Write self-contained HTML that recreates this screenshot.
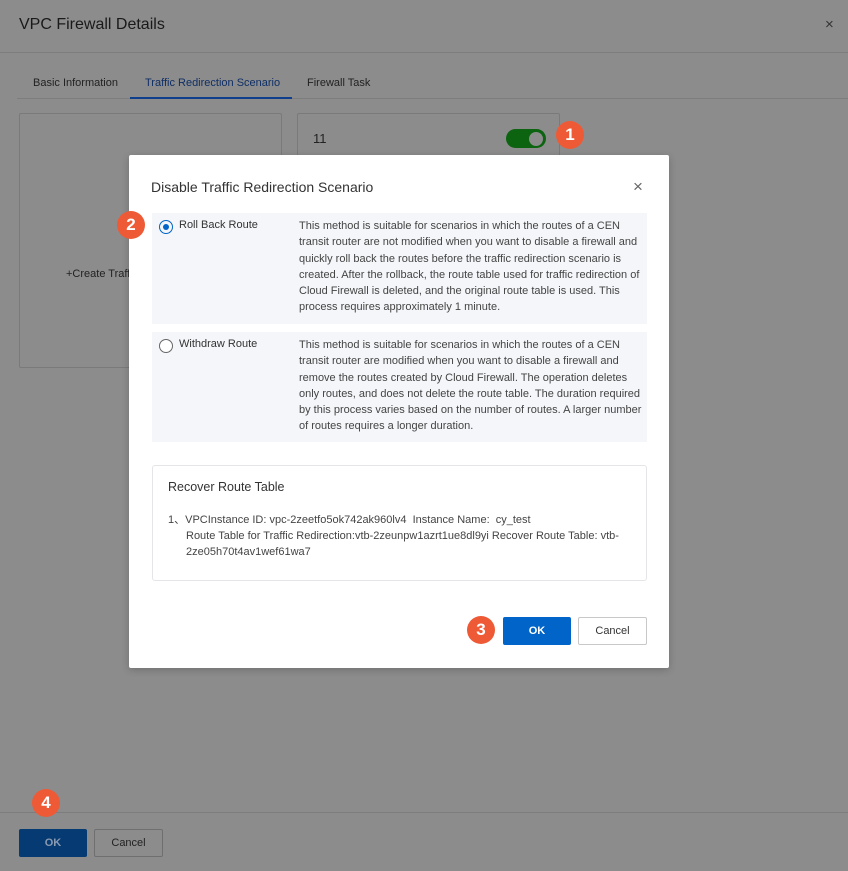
<!DOCTYPE html>
<html><head><meta charset="utf-8"><style>
*{box-sizing:border-box;margin:0;padding:0}
body{width:848px;height:871px;position:relative;overflow:hidden;background:#8c8c8c;font-family:"Liberation Sans",sans-serif;color:#333}
.a{position:absolute}
.badge{position:absolute;width:28px;height:28px;border-radius:50%;background:#ee5a36;color:#fff;font-weight:bold;font-size:17px;text-align:center;line-height:28px}
.p{font-size:11px;line-height:16.3px;color:#444}
</style></head><body>
<div class="a" style="left:19px;top:16px;font-size:16px;color:#1a1a1a">VPC Firewall Details</div>
<div class="a" style="left:825px;top:16px;font-size:15px;color:#333">×</div>
<div class="a" style="left:0;top:52px;width:848px;height:1px;background:#7d7d7d"></div>
<div class="a" style="left:17px;top:98px;width:831px;height:1px;background:#7d7d7d"></div>
<div class="a" style="left:33px;top:77px;font-size:11px;color:#222">Basic Information</div>
<div class="a" style="left:145px;top:77px;font-size:11px;color:#0f2f66">Traffic Redirection Scenario</div>
<div class="a" style="left:130px;top:97px;width:162px;height:2px;background:#0f3e8c"></div>
<div class="a" style="left:307px;top:77px;font-size:11px;color:#222">Firewall Task</div>
<div class="a" style="left:19px;top:113px;width:263px;height:255px;border:1px solid #7a7a7a;border-radius:2px"></div>
<div class="a" style="left:66px;top:268px;font-size:11px;color:#222">+Create Traffic</div>
<div class="a" style="left:297px;top:113px;width:263px;height:60px;border:1px solid #7a7a7a;border-radius:2px"></div>
<div class="a" style="left:313px;top:131px;font-size:13px;color:#222">11</div>
<div class="a" style="left:506px;top:129px;width:40px;height:19px;border-radius:10px;background:#0c6310"></div>
<div class="a" style="left:529px;top:132px;width:14px;height:14px;border-radius:50%;background:#8c8c8c"></div>
<div class="badge" style="left:556px;top:121px">1</div>

<div class="a" style="left:129px;top:155px;width:540px;height:513px;background:#fff;border-radius:2px;box-shadow:0 2px 8px rgba(0,0,0,.2)">
<div class="a" style="left:22px;top:24px;font-size:14px;color:#333">Disable Traffic Redirection Scenario</div>
<div class="a" style="left:504px;top:22px;font-size:17px;color:#666">×</div>
<div class="a" style="left:23px;top:58px;width:495px;height:111px;background:#f4f6f9"></div>
<div class="a" style="left:30px;top:65px;width:14px;height:14px;border-radius:50%;border:1px solid #0064c8"></div>
<div class="a" style="left:34px;top:69px;width:6px;height:6px;border-radius:50%;background:#0064c8"></div>
<div class="a" style="left:50px;top:64px;font-size:11px;color:#333">Roll Back Route</div>
<div class="a p" style="left:170px;top:63px;width:348px">This method is suitable for scenarios in which the routes of a CEN transit router are not modified when you want to disable a firewall and quickly roll back the routes before the traffic redirection scenario is created. After the rollback, the route table used for traffic redirection of Cloud Firewall is deleted, and the original route table is used. This process requires approximately 1 minute.</div>
<div class="a" style="left:23px;top:177px;width:495px;height:110px;background:#f4f6f9"></div>
<div class="a" style="left:30px;top:184px;width:14px;height:14px;border-radius:50%;border:1px solid #666;background:#fff"></div>
<div class="a" style="left:50px;top:183px;font-size:11px;color:#333">Withdraw Route</div>
<div class="a p" style="left:170px;top:182px;width:348px">This method is suitable for scenarios in which the routes of a CEN transit router are modified when you want to disable a firewall and remove the routes created by Cloud Firewall. The operation deletes only routes, and does not delete the route table. The duration required by this process varies based on the number of routes. A larger number of routes requires a longer duration.</div>
<div class="a" style="left:23px;top:310px;width:495px;height:116px;border:1px solid #e3e5e8;border-radius:3px"></div>
<div class="a" style="left:39px;top:325px;font-size:12.5px;color:#333">Recover Route Table</div>
<div class="a p" style="left:39px;top:357px;width:460px">1、VPCInstance ID: vpc-2zeetfo5ok742ak960lv4&nbsp;&nbsp;Instance Name: &nbsp;cy_test</div>
<div class="a p" style="left:57px;top:373px;width:450px">Route Table for Traffic Redirection:vtb-2zeunpw1azrt1ue8dl9yi Recover Route Table: vtb-2ze05h70t4av1wef61wa7</div>
<div class="a" style="left:374px;top:462px;width:68px;height:28px;background:#0064c8;border-radius:2px;color:#fff;font-size:11px;font-weight:bold;text-align:center;line-height:28px">OK</div>
<div class="a" style="left:449px;top:462px;width:69px;height:28px;border:1px solid #c8c8c8;border-radius:2px;color:#333;font-size:11px;text-align:center;line-height:26px">Cancel</div>
</div>
<div class="badge" style="left:117px;top:211px">2</div>
<div class="badge" style="left:467px;top:616px">3</div>

<div class="a" style="left:0;top:812px;width:848px;height:1px;background:#7d7d7d"></div>
<div class="badge" style="left:32px;top:789px">4</div>
<div class="a" style="left:19px;top:829px;width:68px;height:28px;background:#053a73;border-radius:2px;color:#8a9ab0;font-size:11px;font-weight:bold;text-align:center;line-height:28px">OK</div>
<div class="a" style="left:94px;top:829px;width:69px;height:28px;border:1px solid #6f6f6f;border-radius:2px;color:#222;font-size:11px;text-align:center;line-height:26px">Cancel</div>
</body></html>
